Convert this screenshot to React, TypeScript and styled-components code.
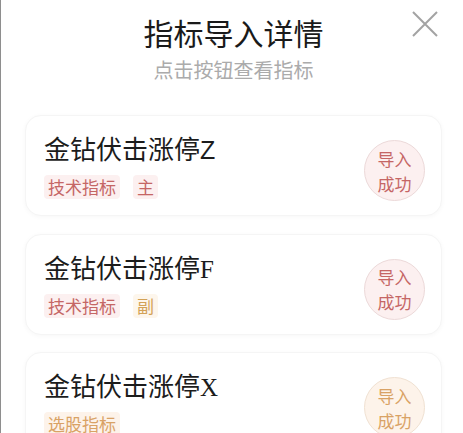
import React from 'react';
import styled, { createGlobalStyle } from 'styled-components';

type Tone = 'red' | 'gold' | 'orange';

type Indicator = {
  name: string;
  letter: string;
  serifLetter: boolean;
  tags: { label: string; tone: Tone }[];
  badgeTone: Tone;
};

const palette: Record<Tone, { text: string; bg: string; border: string }> = {
  red: { text: '#c56665', bg: '#fcf0f0', border: '#ecd9d9' },
  gold: { text: '#d3a256', bg: '#fdf6ec', border: '#efe2cf' },
  orange: { text: '#d9a265', bg: '#fdf3ea', border: '#f0e1d2' },
};

const indicators: Indicator[] = [
  {
    name: '金钻伏击涨停',
    letter: 'Z',
    serifLetter: false,
    tags: [
      { label: '技术指标', tone: 'red' },
      { label: '主', tone: 'red' },
    ],
    badgeTone: 'red',
  },
  {
    name: '金钻伏击涨停',
    letter: 'F',
    serifLetter: true,
    tags: [
      { label: '技术指标', tone: 'red' },
      { label: '副', tone: 'gold' },
    ],
    badgeTone: 'red',
  },
  {
    name: '金钻伏击涨停',
    letter: 'X',
    serifLetter: true,
    tags: [{ label: '选股指标', tone: 'orange' }],
    badgeTone: 'orange',
  },
];

const GlobalStyle = createGlobalStyle`
  html, body {
    margin: 0;
    padding: 0;
    background: #ffffff;
    overflow: hidden;
  }
  body {
    font-family: "Noto Sans CJK SC", "Noto Sans", sans-serif;
  }
`;

const Page = styled.div`
  position: relative;
  height: 433px;
  overflow: hidden;
  box-sizing: border-box;
  border-left: 1px solid #8e8e8e;
  padding: 12px 21px 0 24px;
  background: #ffffff;
`;

const Header = styled.header`
  display: flex;
  flex-direction: column;
  align-items: center;
`;

const Title = styled.h1`
  margin: 0;
  height: 40px;
  font-size: 30px;
  line-height: 40px;
  font-weight: 400;
  color: #1a1a1a;
`;

const Subtitle = styled.p`
  margin: 5px 0 0;
  height: 26px;
  font-size: 20px;
  line-height: 26px;
  color: #ababab;
`;

const CloseButton = styled.button`
  position: absolute;
  top: 11px;
  right: 25px;
  width: 26px;
  height: 26px;
  padding: 0;
  border: none;
  background: transparent;
  display: flex;
  align-items: center;
  justify-content: center;
`;

const List = styled.div`
  display: flex;
  flex-direction: column;
  gap: 17.5px;
  margin-top: 32px;
`;

const Card = styled.div`
  flex: none;
  height: 101px;
  box-sizing: border-box;
  display: flex;
  align-items: flex-start;
  justify-content: space-between;
  padding: 15px 16px 0 18px;
  border-radius: 16px;
  border: 1px solid #f5f5f5;
  box-shadow: 0 1px 5px rgba(0, 0, 0, 0.035);
  background: #ffffff;
`;

const Info = styled.div`
  display: flex;
  flex-direction: column;
  gap: 10px;
`;

const Name = styled.div`
  height: 34px;
  font-size: 26px;
  line-height: 34px;
  color: #1c1c1c;
  white-space: nowrap;
`;

const Letter = styled.span<{ $serif: boolean }>`
  font-family: ${(p) => (p.$serif ? '"Liberation Serif", serif' : '"Liberation Sans", sans-serif')};
  font-size: 25px;
  line-height: 1;
`;

const Tags = styled.div`
  display: flex;
  gap: 13px;
  height: 24px;
`;

const Tag = styled.span<{ $tone: Tone }>`
  font-size: 17px;
  line-height: 24px;
  height: 24px;
  padding: 0 4px;
  border-radius: 4px;
  color: ${(p) => palette[p.$tone].text};
  background: ${(p) => palette[p.$tone].bg};
`;

const Badge = styled.div<{ $tone: Tone }>`
  flex: none;
  width: 61px;
  height: 61px;
  margin-top: 9px;
  border-radius: 50%;
  box-sizing: border-box;
  display: flex;
  align-items: center;
  justify-content: center;
  text-align: center;
  font-size: 17px;
  line-height: 25px;
  color: ${(p) => palette[p.$tone].text};
  background: ${(p) => palette[p.$tone].bg};
  border: 1px solid ${(p) => palette[p.$tone].border};
`;

const App: React.FC = () => {
  return (
    <Page>
      <GlobalStyle />
      <Header>
        <Title>指标导入详情</Title>
        <Subtitle>点击按钮查看指标</Subtitle>
      </Header>
      <CloseButton aria-label="关闭">
        <svg width="26" height="26" viewBox="0 0 26 26">
          <path d="M1 1 L25 25 M25 1 L1 25" stroke="#a3a3a3" strokeWidth="2" fill="none" />
        </svg>
      </CloseButton>
      <List>
        {indicators.map((item) => (
          <Card key={item.letter}>
            <Info>
              <Name>
                {item.name}
                <Letter $serif={item.serifLetter}>{item.letter}</Letter>
              </Name>
              <Tags>
                {item.tags.map((tag) => (
                  <Tag key={tag.label} $tone={tag.tone}>
                    {tag.label}
                  </Tag>
                ))}
              </Tags>
            </Info>
            <Badge $tone={item.badgeTone}>
              导入
              <br />
              成功
            </Badge>
          </Card>
        ))}
      </List>
    </Page>
  );
};

export default App;
